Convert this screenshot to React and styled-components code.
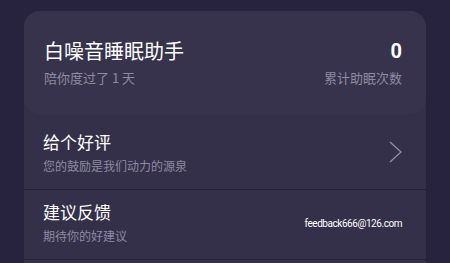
import styled, { createGlobalStyle } from "styled-components";

const GlobalStyle = createGlobalStyle`
  html, body {
    margin: 0;
    padding: 0;
    background: #27233f;
    font-family: "Noto Sans CJK SC", "Noto Sans", Roboto, sans-serif;
  }
`

const Page = styled.div`
  padding: 11px 24px 0;
  height: 263px;
  box-sizing: border-box;
  overflow: hidden;
`

const Panel = styled.div`
  background: #34304a;
  border-radius: 16px 16px 0 0;
`

const Header = styled.div`
  background: #37334c;
  border-radius: 16px;
  height: 103px;
  box-sizing: border-box;
  padding: 25px 24px 0 20px;
  display: flex;
  justify-content: space-between;
`

const Col = styled.div`
  display: flex;
  flex-direction: column;
  align-items: ${(p) => (p.$right ? "flex-end" : "flex-start")};
`

const AppName = styled.div`
  color: #ffffff;
  font-size: 20px;
  line-height: 30px;
`

const Count = styled.div`
  color: #ffffff;
  font-size: 20px;
  font-weight: bold;
  line-height: 30px;
  font-family: Roboto, "Noto Sans", sans-serif;
`

const Hint = styled.div`
  color: #8e8aa1;
  font-size: 13px;
  line-height: 18px;
  margin-top: 3px;
`

const Item = styled.div`
  display: flex;
  align-items: center;
  justify-content: space-between;
  height: ${(p) => p.$h}px;
  box-sizing: border-box;
  padding: 0 24px ${(p) => p.$lift || 0}px 19px;
  border-bottom: 1px solid #25213a;
`

const ItemText = styled.div`
  display: flex;
  flex-direction: column;
`

const ItemTitle = styled.div`
  color: #ffffff;
  font-size: 17px;
  line-height: 24px;
`

const ItemSub = styled.div`
  color: #8e8aa1;
  font-size: 12px;
  line-height: 17px;
  margin-top: 3px;
`

const Email = styled.div`
  color: #ffffff;
  font-size: 10px;
  letter-spacing: -0.45px;
  font-family: Roboto, "Noto Sans", sans-serif;
  margin-top: 4px;
`

function Chevron() {
  return (
    <svg width="14" height="22" viewBox="0 0 14 22">
      <path d="M2 1 L13 11 L2 21" fill="none" stroke="#8e8aa1" strokeWidth="1.4" />
    </svg>
  )
}

export default function App() {
  return (
    <>
      <GlobalStyle />
      <Page>
        <Panel>
          <Header>
            <Col>
              <AppName>白噪音睡眠助手</AppName>
              <Hint>陪你度过了 1 天</Hint>
            </Col>
            <Col $right>
              <Count>0</Count>
              <Hint>累计助眠次数</Hint>
            </Col>
          </Header>
          <Item $h={76}>
            <ItemText>
              <ItemTitle>给个好评</ItemTitle>
              <ItemSub>您的鼓励是我们动力的源泉</ItemSub>
            </ItemText>
            <Chevron />
          </Item>
          <Item $h={70} $lift={6}>
            <ItemText>
              <ItemTitle>建议反馈</ItemTitle>
              <ItemSub>期待你的好建议</ItemSub>
            </ItemText>
            <Email>feedback666@126.com</Email>
          </Item>
          <Item $h={60} />
        </Panel>
      </Page>
    </>
  )
}
